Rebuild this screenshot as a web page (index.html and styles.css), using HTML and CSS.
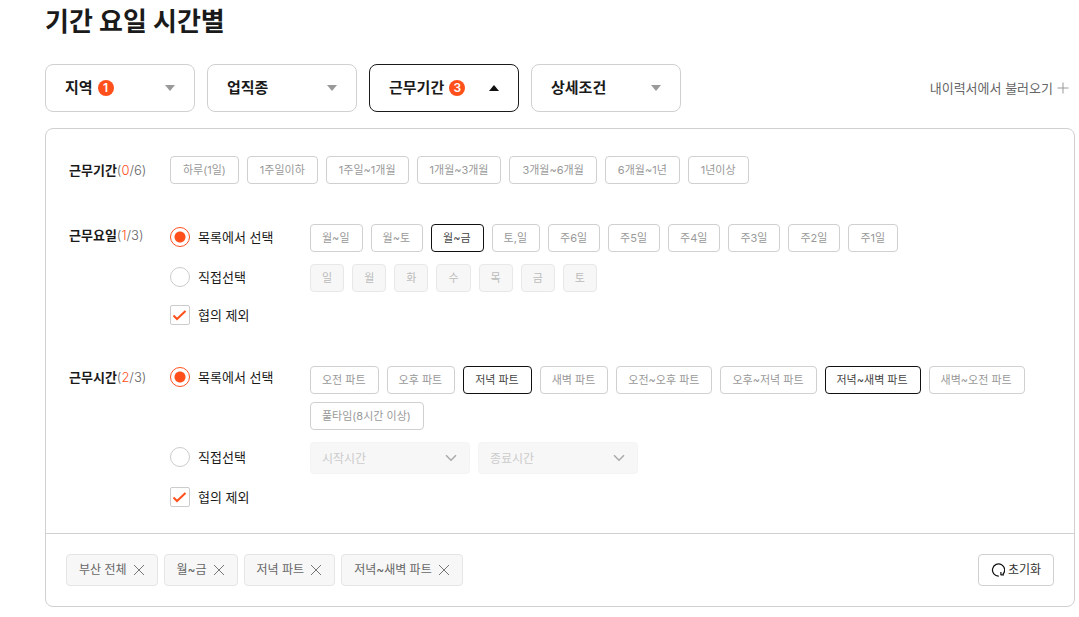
FILE: index.html
```html
<!DOCTYPE html>
<html lang="ko">
<head>
<meta charset="utf-8">
<meta name="viewport" content="width=device-width, initial-scale=1">
<title>기간 요일 시간별</title>
<link rel="stylesheet" href="styles.css">
</head>
<body>
<main class="page">
  <h1 class="title">기간 요일 시간별</h1>

  <div class="toolbar">
    <nav class="tabs">
      <button type="button" class="tab">지역<span class="badge">1</span><svg class="arrow" viewBox="0 0 12 8"><path d="M1 1h10L6 7z"/></svg></button>
      <button type="button" class="tab">업직종<svg class="arrow" viewBox="0 0 12 8"><path d="M1 1h10L6 7z"/></svg></button>
      <button type="button" class="tab tab-open" aria-expanded="true">근무기간<span class="badge">3</span><svg class="arrow" viewBox="0 0 12 8"><path d="M1 7h10L6 1z"/></svg></button>
      <button type="button" class="tab">상세조건<svg class="arrow" viewBox="0 0 12 8"><path d="M1 1h10L6 7z"/></svg></button>
    </nav>
    <a class="load" href="#">내이력서에서 불러오기<svg class="plus" viewBox="0 0 12 12"><path d="M6 .5v11M.5 6h11"/></svg></a>
  </div>

  <section class="panel">
    <div class="groups">
      <div class="group">
        <h2 class="name name-tall">근무기간<span class="count">(<em>0</em>/6)</span></h2>
        <div class="chips chips-period">
          <button type="button" class="chip">하루(1일)</button>
          <button type="button" class="chip">1주일이하</button>
          <button type="button" class="chip">1주일~1개월</button>
          <button type="button" class="chip">1개월~3개월</button>
          <button type="button" class="chip">3개월~6개월</button>
          <button type="button" class="chip">6개월~1년</button>
          <button type="button" class="chip">1년이상</button>
        </div>
      </div>

      <div class="group">
        <h2 class="name">근무요일<span class="count">(<em>1</em>/3)</span></h2>
        <div class="options options-day">
          <label class="choice"><input type="radio" class="radio" name="day" checked>목록에서 선택</label>
          <div class="chips">
            <button type="button" class="chip">월~일</button>
            <button type="button" class="chip">월~토</button>
            <button type="button" class="chip chip-on" aria-pressed="true">월~금</button>
            <button type="button" class="chip">토,일</button>
            <button type="button" class="chip">주6일</button>
            <button type="button" class="chip">주5일</button>
            <button type="button" class="chip">주4일</button>
            <button type="button" class="chip">주3일</button>
            <button type="button" class="chip">주2일</button>
            <button type="button" class="chip">주1일</button>
          </div>
          <label class="choice"><input type="radio" class="radio" name="day">직접선택</label>
          <div class="chips">
            <button type="button" class="chip" disabled>일</button>
            <button type="button" class="chip" disabled>월</button>
            <button type="button" class="chip" disabled>화</button>
            <button type="button" class="chip" disabled>수</button>
            <button type="button" class="chip" disabled>목</button>
            <button type="button" class="chip" disabled>금</button>
            <button type="button" class="chip" disabled>토</button>
          </div>
          <label class="choice choice-check"><span class="check"><input type="checkbox" class="box" checked><svg class="tick" viewBox="0 0 20 20"><path d="M3.500 10.500l3.500 3.500 8.500-8"/></svg></span>협의 제외</label>
        </div>
      </div>

      <div class="group">
        <h2 class="name">근무시간<span class="count">(<em>2</em>/3)</span></h2>
        <div class="options">
          <label class="choice choice-high"><input type="radio" class="radio" name="time" checked>목록에서 선택</label>
          <div class="chips">
            <button type="button" class="chip">오전 파트</button>
            <button type="button" class="chip">오후 파트</button>
            <button type="button" class="chip chip-on" aria-pressed="true">저녁 파트</button>
            <button type="button" class="chip">새벽 파트</button>
            <button type="button" class="chip">오전~오후 파트</button>
            <button type="button" class="chip">오후~저녁 파트</button>
            <button type="button" class="chip chip-on" aria-pressed="true">저녁~새벽 파트</button>
            <button type="button" class="chip">새벽~오전 파트</button>
            <button type="button" class="chip">풀타임(8시간 이상)</button>
          </div>
          <label class="choice choice-low"><input type="radio" class="radio" name="time">직접선택</label>
          <div class="chips">
            <span class="picker"><select class="select" aria-label="시작시간" disabled><option>시작시간</option></select><svg class="chevron" viewBox="0 0 12 8"><path d="M1 1.200l5 5 5-5"/></svg></span>
            <span class="picker"><select class="select" aria-label="종료시간" disabled><option>종료시간</option></select><svg class="chevron" viewBox="0 0 12 8"><path d="M1 1.200l5 5 5-5"/></svg></span>
          </div>
          <label class="choice choice-check"><span class="check"><input type="checkbox" class="box" checked><svg class="tick" viewBox="0 0 20 20"><path d="M3.500 10.500l3.500 3.500 8.500-8"/></svg></span>협의 제외</label>
        </div>
      </div>
    </div>

    <footer class="summary">
      <div class="tags">
        <button type="button" class="tag">부산 전체<svg class="cross" viewBox="0 0 12 12"><path d="M1 1l10 10M11 1L1 11"/></svg></button>
        <button type="button" class="tag">월~금<svg class="cross" viewBox="0 0 12 12"><path d="M1 1l10 10M11 1L1 11"/></svg></button>
        <button type="button" class="tag">저녁 파트<svg class="cross" viewBox="0 0 12 12"><path d="M1 1l10 10M11 1L1 11"/></svg></button>
        <button type="button" class="tag">저녁~새벽 파트<svg class="cross" viewBox="0 0 12 12"><path d="M1 1l10 10M11 1L1 11"/></svg></button>
      </div>
      <button type="button" class="reset"><svg class="redo" viewBox="0 0 14 14"><path d="M7.800 13.100A6.100 6.100 0 1 1 11.800 11.400"/><path d="M9.600 11.900h3.400M9.900 11.900V9"/></svg>초기화</button>
    </footer>
  </section>
</main>
</body>
</html>
```

FILE: styles.css
```css
* {
  box-sizing: border-box;
}

body {
  margin: 0;
  background: #fff;
  color: #1a1a1a;
}

body,
button,
select {
  font-family: Inter, "Noto Sans CJK KR", sans-serif;
}

button {
  cursor: pointer;
}

.page {
  padding: 6px 4px 10px 45px;
}

.title {
  margin: 0 0 26px;
  font-size: 26px;
  line-height: 32px;
  font-weight: 700;
}

.toolbar {
  display: flex;
  align-items: center;
  justify-content: space-between;
  margin-bottom: 16px;
}

.tabs {
  display: flex;
  gap: 12px;
}

.tab {
  display: flex;
  align-items: center;
  width: 150px;
  height: 48px;
  padding: 0 18px 0 19px;
  border: 1px solid #d0d0d0;
  border-radius: 8px;
  background: #fff;
  color: #1a1a1a;
  font-size: 15px;
  line-height: 20px;
  font-weight: 700;
}

.tab-open {
  border-color: #1a1a1a;
}

.badge {
  width: 16px;
  height: 16px;
  margin-left: 5px;
  border-radius: 8px;
  background: #ff501b;
  color: #fff;
  font-size: 12px;
  line-height: 16px;
  font-weight: 600;
  text-align: center;
}

.arrow {
  width: 12px;
  height: 8px;
  margin-left: auto;
  fill: #999;
}

.tab-open .arrow {
  fill: #111;
}

.load {
  display: flex;
  align-items: center;
  gap: 4px;
  padding-right: 6px;
  color: #666;
  font-size: 13px;
  line-height: 20px;
  text-decoration: none;
}

.plus {
  width: 12px;
  height: 12px;
  fill: none;
  stroke: #999;
}

.panel {
  border: 1px solid #d0d0d0;
  border-radius: 8px;
}

.groups {
  display: grid;
  gap: 40px;
  padding: 27px 24px 26px 23px;
}

.group {
  display: grid;
  grid-template-columns: 101px 1fr;
}

.name {
  margin: 0;
  font-size: 13px;
  line-height: 22px;
  font-weight: 700;
}

.name-tall {
  line-height: 28px;
}

.count {
  color: #666;
  font-weight: 300;
}

.count em {
  color: #ff501b;
  font-style: normal;
}

.options {
  display: grid;
  grid-template-columns: 140px 1fr;
  row-gap: 12px;
  align-items: start;
}

.options-day {
  padding-bottom: 1px;
}

.chips {
  display: flex;
  flex-wrap: wrap;
  gap: 8px;
}

.chip {
  height: 28px;
  padding: 0 12px 0 11px;
  border: 1px solid #d0d0d0;
  border-radius: 4px;
  background: #fff;
  color: #999;
  font-size: 11px;
  line-height: 16px;
}

.chips-period .chip {
  padding: 0 12px;
}

.chip:disabled {
  padding: 0 11px;
  border-color: #e8e8e8;
  background: #f7f7f7;
  color: #bbb;
}

.chip-on {
  border-color: #111;
  color: #444;
}

.choice {
  display: flex;
  align-items: center;
  gap: 8px;
  height: 20px;
  margin-top: 3px;
  font-size: 13px;
  line-height: 20px;
}

.choice-high,
.choice-check {
  margin-top: 1px;
}

.choice-low {
  margin-top: 5px;
}

.radio,
.box {
  appearance: none;
  display: block;
  width: 20px;
  height: 20px;
  margin: 0;
  border: 1px solid #ccc;
  background: #fff;
}

.radio {
  border-radius: 10px;
}

.radio:checked {
  border-color: #ff501b;
  background: radial-gradient(circle, #ff501b 5px, #fff 6px);
}

.box {
  border-radius: 2px;
}

.check,
.picker {
  position: relative;
}

.tick {
  position: absolute;
  inset: 0;
  width: 20px;
  height: 20px;
  fill: none;
  stroke: #ff501b;
  stroke-width: 2;
  pointer-events: none;
}

.select {
  appearance: none;
  display: block;
  width: 160px;
  height: 32px;
  padding: 0 32px 0 11px;
  border: 1px solid #f4f4f4;
  border-radius: 4px;
  background: #f7f7f7;
  color: #ccc;
  font-size: 12px;
  opacity: 1;
}

.chevron {
  position: absolute;
  top: 12px;
  right: 13px;
  width: 12px;
  height: 8px;
  fill: none;
  stroke: #aaa;
  stroke-width: 1.5;
  pointer-events: none;
}

.summary {
  display: flex;
  align-items: center;
  justify-content: space-between;
  padding: 20px;
  border-top: 1px solid #d0d0d0;
}

.tags {
  display: flex;
  gap: 6px;
}

.tag,
.reset {
  display: flex;
  align-items: center;
  height: 32px;
  padding: 0 12px;
  border: 1px solid #e5e5e5;
  border-radius: 4px;
  background: #f7f7f7;
  color: #666;
  font-size: 12px;
  line-height: 16px;
}

.tag {
  gap: 6px;
}

.cross {
  width: 12px;
  height: 12px;
  fill: none;
  stroke: #777;
}

.reset {
  gap: 3px;
  border-color: #d0d0d0;
  background: #fff;
  color: #333;
}

.redo {
  width: 14px;
  height: 14px;
  fill: none;
  stroke: #111;
  stroke-width: 1.2;
}
```
